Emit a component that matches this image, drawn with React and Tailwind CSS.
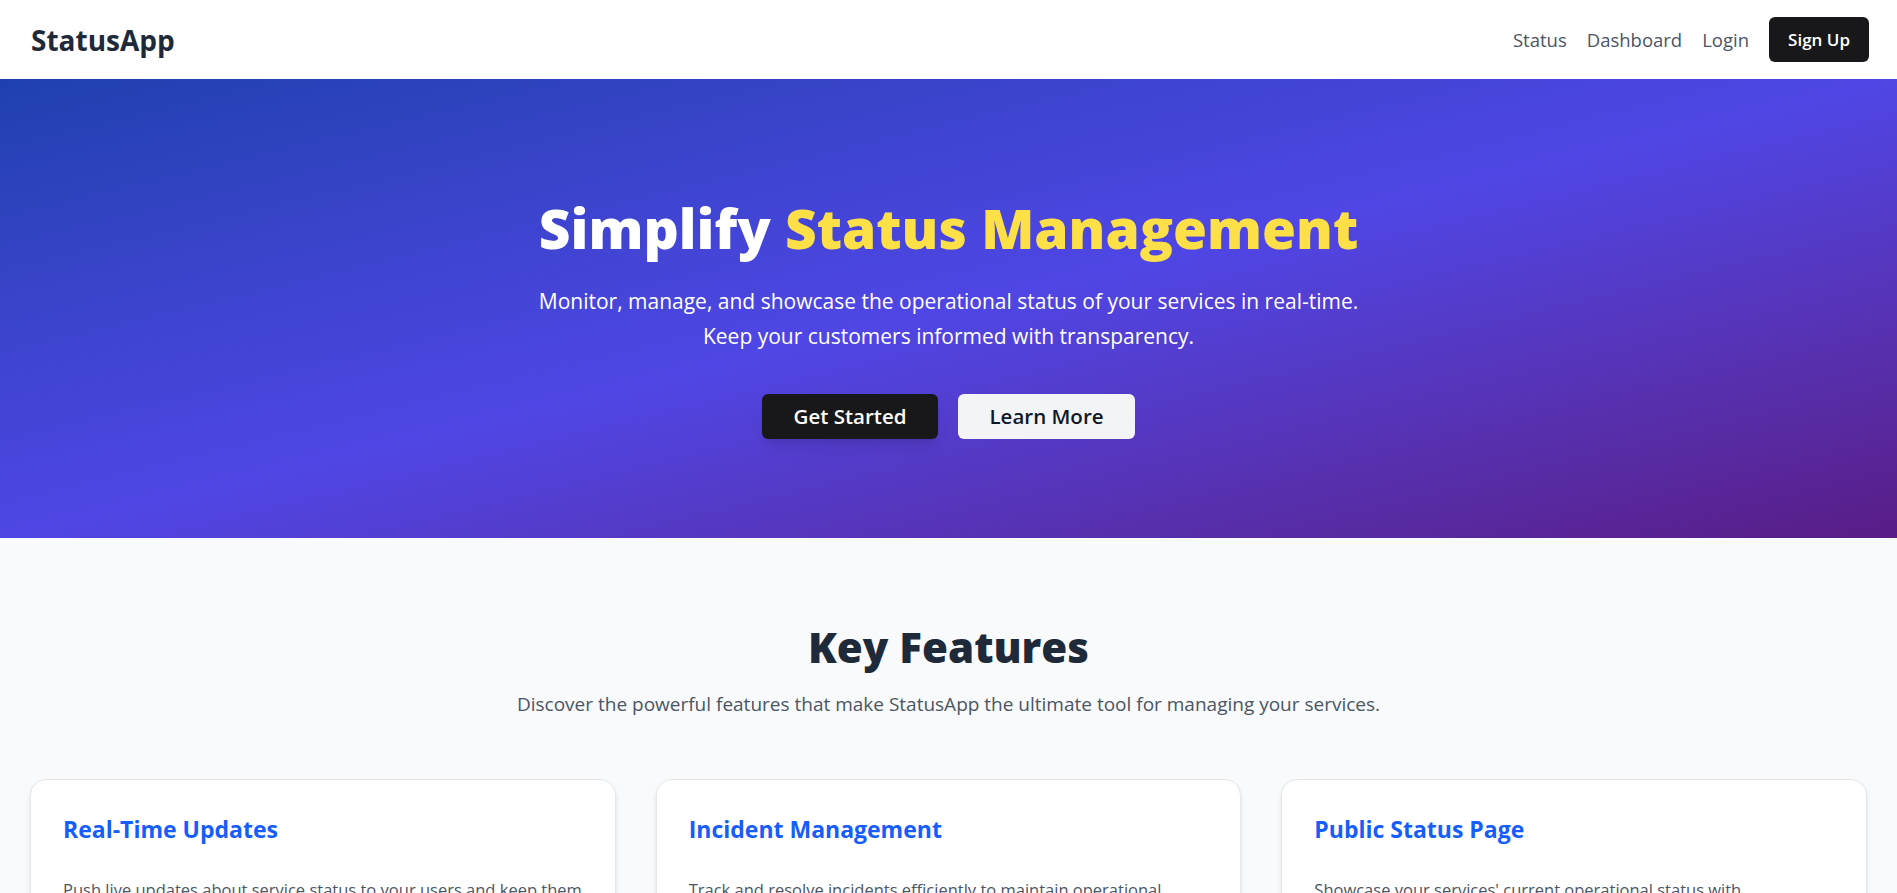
import React from 'react';

const features = [
  {
    title: 'Real-Time Updates',
    text: 'Push live updates about service status to your users and keep them informed every step of the way.',
  },
  {
    title: 'Incident Management',
    text: 'Track and resolve incidents efficiently to maintain operational excellence and minimize downtime.',
  },
  {
    title: 'Public Status Page',
    text: "Showcase your services' current operational status with customizable, branded public pages.",
  },
];

const App = () => {
  return (
    <div className="min-h-screen bg-gray-50 font-['Open_Sans',sans-serif]">
      {/* Navbar */}
      <nav className="h-[79px] bg-white flex items-center justify-between pl-[31px] pr-[28px]">
        <div className="text-[28px] font-bold text-gray-800">StatusApp</div>
        <div className="flex items-center gap-5">
          <a href="#" className="text-[18.5px] text-gray-600">Status</a>
          <a href="#" className="text-[18.5px] text-gray-600">Dashboard</a>
          <a href="#" className="text-[18.5px] text-gray-600">Login</a>
          <button className="h-[45px] px-[19px] bg-zinc-900 text-white text-[17px] font-semibold rounded-md">
            Sign Up
          </button>
        </div>
      </nav>

      {/* Hero */}
      <section className="bg-gradient-to-br from-[#1e40af] via-[#4f46e5] to-[#581c87] pt-[111px] pb-[99px] text-center">
        <h1 className="text-[55px] leading-[75px] font-extrabold text-white">
          Simplify <span className="text-[#fde047]">Status Management</span>
        </h1>
        <p className="mt-[19px] text-[21px] leading-[35px] text-white">
          Monitor, manage, and showcase the operational status of your services in real-time.
          <br />
          Keep your customers informed with transparency.
        </p>
        <div className="mt-[40px] flex justify-center gap-5">
          <button className="w-[176px] h-[45px] bg-zinc-900 text-white text-[20.5px] font-semibold rounded-md shadow-lg">
            Get Started
          </button>
          <button className="w-[177px] h-[45px] bg-gray-100 text-gray-900 text-[20.5px] font-semibold rounded-md">
            Learn More
          </button>
        </div>
      </section>

      {/* Features */}
      <section className="pt-[85px] pb-20 px-[30px]">
        <h2 className="text-center text-[42px] leading-[48px] font-extrabold text-gray-800">Key Features</h2>
        <p className="mt-[19px] text-center text-[19px] leading-[28px] text-gray-600">
          Discover the powerful features that make StatusApp the ultimate tool for managing your services.
        </p>
        <div className="mt-[61px] grid grid-cols-3 gap-10">
          {features.map((f) => (
            <div key={f.title} className="bg-white border border-gray-200 rounded-2xl shadow-md p-8">
              <h3 className="text-[23px] leading-[34px] font-bold text-blue-600">{f.title}</h3>
              <p className="mt-[30px] text-[16.5px] leading-[27px] text-gray-600">{f.text}</p>
            </div>
          ))}
        </div>
      </section>
    </div>
  );
};

export default App;
